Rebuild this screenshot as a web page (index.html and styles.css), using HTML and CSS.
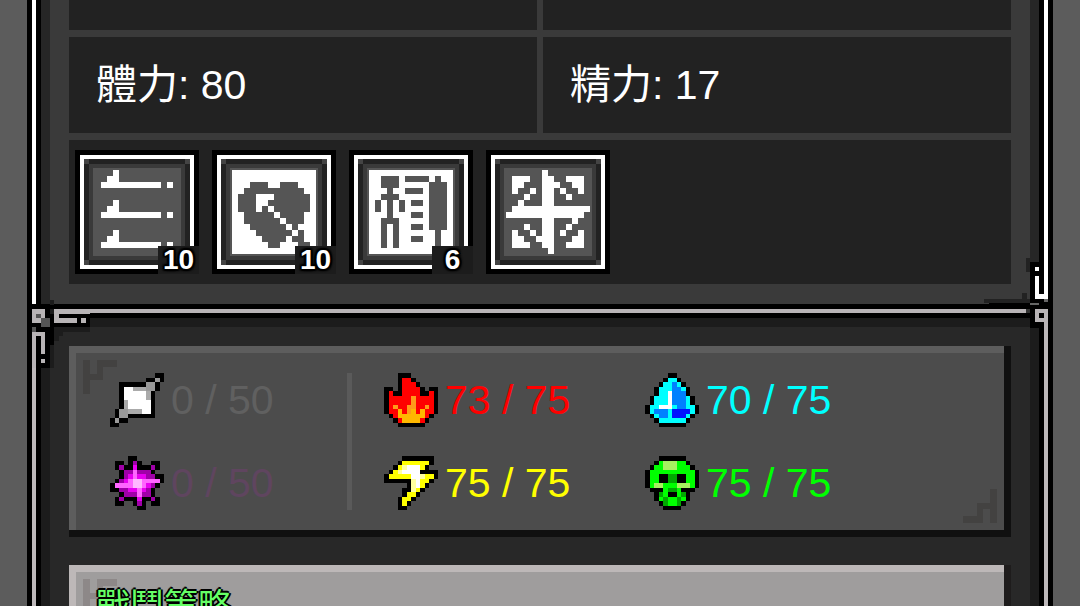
FILE: index.html
```html
<!DOCTYPE html>
<html lang="zh-Hant">
<head>
  <meta charset="UTF-8">
  <meta name="viewport" content="width=device-width, initial-scale=1.0">
  <title>角色</title>
  <link rel="stylesheet" href="styles.css">
</head>
<body>
  <div class="frame">
    <section class="status">
      <div class="stats">
        <div class="stat stat-cut"></div>
        <div class="stat stat-cut"></div>
        <div class="stat">體力: 80</div>
        <div class="stat">精力: 17</div>
      </div>
      <div class="skills">
        <button type="button" class="skill" aria-label="10"><svg class="glyph" data-sprite="blades"></svg><span class="count">10</span></button>
        <button type="button" class="skill" aria-label="10"><svg class="glyph" data-sprite="heart"></svg><span class="count">10</span></button>
        <button type="button" class="skill" aria-label="6"><svg class="glyph" data-sprite="body"></svg><span class="count">6</span></button>
        <button type="button" class="skill" aria-label="+"><svg class="glyph" data-sprite="cross"></svg></button>
      </div>
    </section>

    <div class="divider">
      <svg class="joint joint-left" data-sprite="joint"></svg>
      <svg class="joint joint-right" width="64" height="70" viewBox="0 0 64 70" shape-rendering="crispEdges">
        <path fill="#222" d="M-5 39h46v4H-5zM37 -2h4v14h-4zM33 33h5v6h-5z"/>
        <path fill="#000" d="M0 43h64v5H0zM41 2h23v68H50v-2H41z"/>
        <path fill="#fff" d="M55 0h4v39H46V16h4v18h5zM46 7h4v4h-4z"/>
        <path fill="#666" d="M55 39h4v3h-4zM41 43h9v2h-9z"/>
        <path fill="#333" d="M37 49h4v4h-4z"/>
        <path fill="#b8b4b6" d="M46 49h13v21h-4v-8h-9z"/>
        <path fill="#000" d="M50 53h5v5h-5z"/>
      </svg>
    </div>

    <section class="lower">
      <div class="panel">
        <div class="panel-face resources">
          <svg class="notch notch-top" data-sprite="notch"></svg>
          <svg class="notch notch-bottom" data-sprite="notch"></svg>
          <div class="reserve">
            <div class="resource empty"><svg class="icon" data-sprite="crystal"></svg>0 / 50</div>
            <div class="resource empty-star"><svg class="icon" data-sprite="star"></svg>0 / 50</div>
          </div>
          <div class="elements">
            <div class="resource fire"><svg class="icon" data-sprite="fire"></svg>73 / 75</div>
            <div class="resource water"><svg class="icon" data-sprite="water"></svg>70 / 75</div>
            <div class="resource bolt"><svg class="icon" data-sprite="bolt"></svg>75 / 75</div>
            <div class="resource skull"><svg class="icon" data-sprite="skull"></svg>75 / 75</div>
          </div>
        </div>
      </div>
      <div class="panel panel-light">
        <div class="panel-face">
          <svg class="notch notch-top" data-sprite="notch"></svg>
          <h2>戰鬥策略</h2>
        </div>
      </div>
    </section>
  </div>

  <script src="sprites.js"></script>
</body>
</html>
```

FILE: styles.css
```css
* {
  margin: 0;
  padding: 0;
  box-sizing: border-box;
}

body {
  height: 100vh;
  overflow: hidden;
  background: #5c5c5c;
  color: #fff;
  font-family: "Liberation Sans", "Noto Sans CJK TC", sans-serif;
  font-size: 41px;
  line-height: 48px;
}

svg {
  display: block;
}

.frame {
  margin: 0 27px;
}

/* Upper part */
.status {
  padding: 0 42px 20px;
  background: #3a3a3a;
  box-shadow: inset 5px 0 #000, inset -5px 0 #000,
    inset 9px 0 #fff, inset -9px 0 #fff,
    inset 14px 0 #000, inset -14px 0 #000,
    inset 23px 0 #262626, inset -23px 0 #262626;
}

.stats {
  display: grid;
  grid-template-columns: 1fr 1fr;
  gap: 7px 6px;
  margin-bottom: 7px;
}

.stat {
  padding: 24px 27px;
  background: #222;
}

.stat-cut {
  height: 30px;
  padding: 0;
}

.skills {
  display: flex;
  gap: 13px;
  padding: 10px 6px;
  background: #222;
}

/* Skill button: black rim, white line, two dark bevels */
.skill {
  position: relative;
  display: flex;
  align-items: center;
  justify-content: center;
  width: 124px;
  height: 124px;
  border: 5px solid #000;
  background: #555;
  box-shadow: inset 0 0 0 4px #fff, inset 0 0 0 9px #222, inset 0 0 0 13px #3a3a3a;
  font-family: inherit;
  color: #fff;
  cursor: pointer;
}

/* Lighter squares in the bevel corners */
.skill::before {
  content: '';
  position: absolute;
  inset: 4px;
  background:
    linear-gradient(#444, #444) left top,
    linear-gradient(#444, #444) right top,
    linear-gradient(#444, #444) left bottom,
    linear-gradient(#444, #444) right bottom;
  background-size: 5px 5px;
  background-repeat: no-repeat;
}

.glyph {
  width: 84px;
  height: 84px;
}

.count {
  position: absolute;
  right: -5px;
  bottom: -5px;
  width: 41px;
  height: 28px;
  background: #1c1c1c;
  font-size: 28px;
  font-weight: bold;
  line-height: 28px;
  text-align: center;
  text-shadow: 2px 0 #000, -2px 0 #000, 0 2px #000, 0 -2px #000,
    2px 2px 2px #000, -2px -2px 2px #000, 2px -2px 2px #000, -2px 2px 2px #000;
}

/* Bar between the two parts */
.divider {
  position: relative;
  height: 14px;
  border: solid #000;
  border-width: 5px 0;
  background: #b8b4b6;
}

.joint {
  position: absolute;
}

.joint-left {
  top: -9px;
  left: 0;
  width: 63px;
  height: 68px;
}

.joint-right {
  top: -49px;
  right: 0;
  overflow: visible;
}

/* Lower part */
.lower {
  padding: 28px 42px 0;
  background: #282828;
  box-shadow: inset 5px 0 #000, inset -5px 0 #000,
    inset 9px 0 #bdb8ba, inset -9px 0 #bdb8ba,
    inset 14px 0 #000, inset -14px 0 #000,
    inset 23px 0 #1c1c1c, inset -23px 0 #1c1c1c,
    inset 0 9px #1c1c1c;
}

.panel {
  margin-bottom: 28px;
  padding: 0 7px 7px 0;
  background: #101010;
}

.panel-face {
  position: relative;
  border: solid #5d5d5d;
  border-width: 7px 0 0 7px;
  background: #4c4c4c;
}

.panel-light {
  background: #1e1c1c;
}

.panel-light .panel-face {
  min-height: 180px;
  padding: 10px 20px;
  border-color: #bdb8b8;
  background: #9f9d9d;
}

.panel-light h2 {
  position: relative;
  color: #6f6;
  font-size: 34px;
  font-weight: normal;
  line-height: 48px;
  text-shadow: 2px 0 #000, -2px 0 #000, 0 2px #000, 0 -2px #000,
    1px 1px 1px #000, -1px -1px 1px #000;
}

.notch {
  position: absolute;
  width: 34px;
  height: 34px;
  color: #434241;
}

.notch-top {
  top: 7px;
  left: 7px;
}

.notch-bottom {
  right: 7px;
  bottom: 7px;
  transform: rotate(180deg);
}

.panel-light .notch {
  color: #8d8888;
}

.resources {
  display: flex;
  padding: 20px 0 20px 34px;
}

.reserve {
  display: grid;
  row-gap: 29px;
  width: 242px;
  border-right: 5px solid #5a5a5a;
}

.elements {
  flex: 1;
  display: grid;
  grid-template-columns: repeat(auto-fill, 261px);
  row-gap: 29px;
  margin-left: 32px;
}

.resource {
  display: flex;
  align-items: center;
  gap: 7px;
  height: 54px;
  white-space: nowrap;
}

.icon {
  width: 54px;
  height: 54px;
}

.empty { color: #606060; }
.empty-star { color: #5f455f; }
.fire { color: #f00; }
.water { color: #0ff; }
.bolt { color: #ff0; }
.skull { color: #0f0; }
```

FILE: sprites.js
```javascript
// One letter per pixel, "." is transparent
const sprites = {
  blades: {
    colors: { W: "#fff" },
    rows: [
      "...W..........", "..WW..........", ".WWWWWWWWWW.W.", "..............", "..............",
      "...W..........", "..WW..........", ".WWWWWWWWWW.W.", "..............", "..............",
      "...W..........", "..WW..........", ".WWWWWWWWWW.W.", ".............."
    ]
  },
  heart: {
    colors: { W: "#fff" },
    rows: [
      "WWWWWWWWWWWWWW",
      "WWWWWWWWWWWWWW",
      "WWW...WW...WWW",
      "WW..........WW",
      "W...WWW......W",
      "W...WW.......W",
      "W...W.W......W",
      "WW.....W....WW",
      "WW......W...WW",
      "WWW......W.WWW",
      "WWWW......W.WW",
      "WWWWW....W..WW",
      "WWWWWW..WWW..W",
      "WWWWWWWWWWWWWW"
    ]
  },
  body: {
    colors: { W: "#fff" },
    rows: [
      "WWWWWWWWWWWWWW",
      "WW...W....W.WW",
      "WW...WWWWW...W",
      "WWW.WW...W...W",
      "WW...WWWWW...W",
      "W.W.W.W..W...W",
      "W.W.W.WWWW...W",
      "WWW.WWW..W...W",
      "WW...WWWWW...W",
      "WW.W.WW..W...W",
      "WW.W.WWWWWW.WW",
      "WW.W.WW..WW.WW",
      "WW.W.WWWWWW.WW",
      "WWWWWWWWWWWWWW"
    ]
  },
  cross: {
    colors: { W: "#fff" },
    rows: [
      "......W.......",
      ".WWW..WW..WWW.",
      ".WW...WWW..WW.",
      ".W..W.WW.W..W.",
      "...W..WW..W...",
      "..W...WW......",
      ".WWWWWWWWWWWWW",
      "WWWWWWWWWWWWW.",
      "......WW...W..",
      "...W..WW..W...",
      ".W..W.WW.W..W.",
      ".WW..WWW...WW.",
      ".WWW..WW..WWW.",
      ".......W......"
    ]
  },
  crystal: {
    colors: { K: "#000", W: "#fff", G: "#aaa", D: "#999" },
    rows: [
      "..........KK",
      "........KKDK",
      "..KKKKKKDDK.",
      "..KWWGGGDDK.",
      "..KWWWWWGK..",
      "..KWWWWWGK..",
      "..KGWWWWWK..",
      "..KGWWWWWK..",
      ".KDDGGGWWK..",
      ".KDDKKKKKK..",
      "KDKK........",
      "KK.........."
    ]
  },
  star: {
    colors: { K: "#000", P: "#a000a8", M: "#e800f0", L: "#ff66ff", W: "#ffb8ff" },
    rows: [
      "....KK......",
      ".KK.KPK..KK.",
      ".KPKKMKKKPK.",
      "..KPPLPPPK..",
      "..KPMLMMPPKK",
      ".KPMLWWLLLLK",
      "KLLLLWWLMPK.",
      "KKPPMMLMPK..",
      "..KPPPLPPK..",
      ".KPKKKMKKPK.",
      ".KK..KPK.KK.",
      "......KK...."
    ]
  },
  fire: {
    colors: { K: "#000", R: "#f00", O: "#ff9a1a", Y: "#ffb800" },
    rows: [
      "...KKK......",
      "...KRRK.....",
      "...KRRRK....",
      "KK.KRRRRK.KK",
      "KRKKRRRRKKRK",
      "KRRRRRORRRRK",
      "KRRRRRORRRRK",
      "KRORROORRORK",
      "KRRYROYRYRRK",
      ".KRYYYYYYRK.",
      "..KRYYYYRK..",
      "...KKKKKK..."
    ]
  },
  bolt: {
    colors: { K: "#000", Y: "#ff0", L: "#ffffa0", W: "#fff" },
    rows: [
      "....KKKKKKK.",
      "...KYYYYYYK.",
      "..KYLWWWYK..",
      ".KYLWWWWKKKK",
      "KYYYYYWWLYYK",
      "KKKKKKLWYYK.",
      ".....KLWYK..",
      "....KKLYK...",
      "....KYYK....",
      "...KYYK.....",
      "...KYK......",
      "...KK......."
    ]
  },
  water: {
    colors: { K: "#000", C: "#0ff", B: "#0080ff", D: "#0010ff", W: "#fff" },
    rows: [
      ".....KK.....",
      "....KCCK....",
      "...KCCBCK...",
      "..KCCCBBCK..",
      "..KCCWBBBK..",
      ".KCCCWBBBCK.",
      ".KCCCWBBBCK.",
      "KCCWWWCBBCCK",
      "KCBBBCDDDDCK",
      ".KCBBCDDDCK.",
      "..KCCCCCCK..",
      "...KKKKKK..."
    ]
  },
  skull: {
    colors: { K: "#000", G: "#0f0", D: "#00a800", L: "#a8f060" },
    rows: [
      "...KKKKKK...",
      "..KGLLLGGK..",
      ".KGGLLLGGGK.",
      "KGGGGGGGGGGK",
      "KGGKKDDKKGGK",
      "KGGKKDDKKGGK",
      "KGLLGGGLLLGK",
      ".KKKGDDGKKK.",
      "..KDGKKGDK..",
      "..KGDGGDGK..",
      "...KDGGDK...",
      "....KKKK...."
    ]
  },
  notch: {
    colors: { N: "currentColor" },
    rows: ["N.NNN", "N.N..", "NNN..", "N....", "N...."]
  },
  joint: {
    colors: { K: "#000", W: "#fff", G: "#b8b4b6", D: "#555", S: "#1c1c1c" },
    rows: [
      ".....S........",
      "KKKKKKKKKKKKKK",
      "KGGGKSGGGGGGGG",
      "KGDGKKGKKKKKKK",
      "KGGDDKGGGGGKGK",
      "KKKDDKKKKKKKKK",
      "KDKKKKSSSSSSSS",
      "KGGGKKSS......",
      "KGKGKKS.......",
      "KGKGKK........",
      "KGKGKS........",
      "KGKGKS........",
      "KGKKKS........",
      "KGKGKS........",
      "KGKKKS........"
    ]
  }
};

document.querySelectorAll("svg[data-sprite]").forEach((svg) => {
  const { colors, rows } = sprites[svg.dataset.sprite];
  svg.setAttribute("viewBox", `0 0 ${rows[0].length} ${rows.length}`);
  svg.setAttribute("preserveAspectRatio", "none");
  svg.setAttribute("shape-rendering", "crispEdges");

  Object.keys(colors).forEach((key) => {
    let d = "";
    rows.forEach((row, y) => {
      for (const run of row.matchAll(new RegExp(key + "+", "g"))) {
        d += `M${run.index} ${y}h${run[0].length}v1h-${run[0].length}z`;
      }
    });
    const path = document.createElementNS("http://www.w3.org/2000/svg", "path");
    path.setAttribute("fill", colors[key]);
    path.setAttribute("d", d);
    svg.appendChild(path);
  });
});
```
